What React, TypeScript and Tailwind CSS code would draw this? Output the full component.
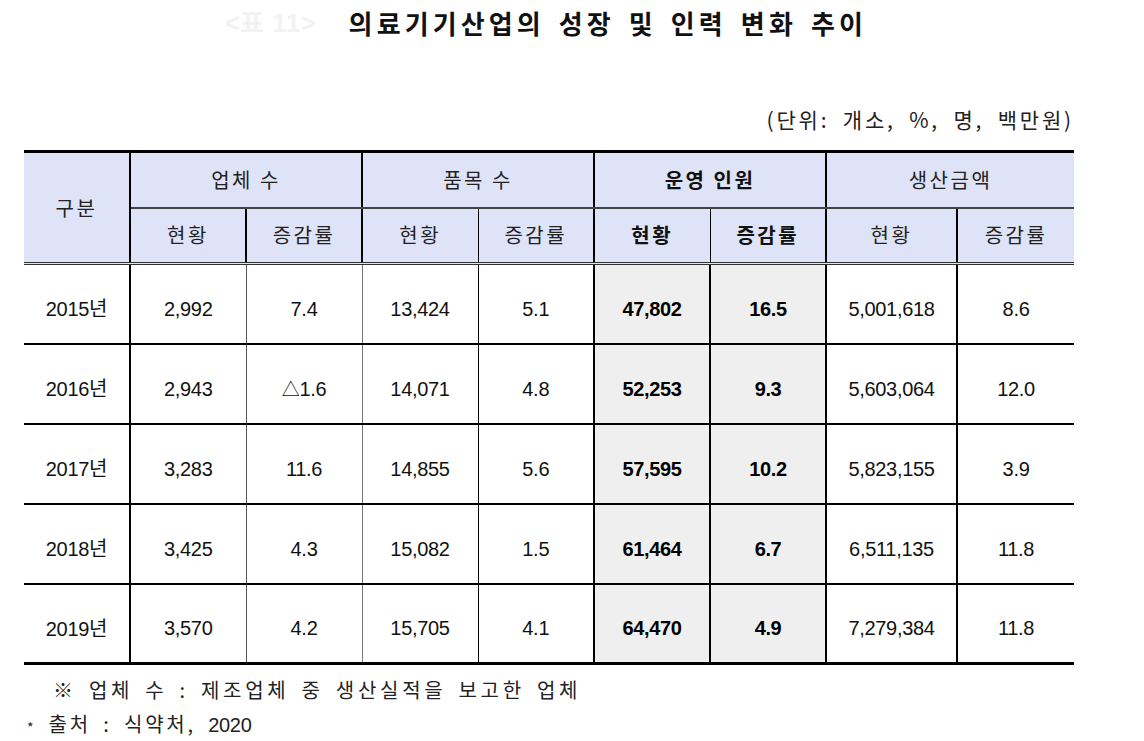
import React from "react";

const kr = { fontFamily: '"Noto Sans CJK KR", "Noto Sans", sans-serif' };
const num = { fontFamily: '"Liberation Sans", Arial, "Noto Sans CJK KR", sans-serif' };

type Row = { y: string; a: string; b: string; c: string; d: string; e: string; f: string; g: string; h: string };
const rows: Row[] = [
  { y: "2015", a: "2,992", b: "7.4", c: "13,424", d: "5.1", e: "47,802", f: "16.5", g: "5,001,618", h: "8.6" },
  { y: "2016", a: "2,943", b: "△1.6", c: "14,071", d: "4.8", e: "52,253", f: "9.3", g: "5,603,064", h: "12.0" },
  { y: "2017", a: "3,283", b: "11.6", c: "14,855", d: "5.6", e: "57,595", f: "10.2", g: "5,823,155", h: "3.9" },
  { y: "2018", a: "3,425", b: "4.3", c: "15,082", d: "1.5", e: "61,464", f: "6.7", g: "6,511,135", h: "11.8" },
  { y: "2019", a: "3,570", b: "4.2", c: "15,705", d: "4.1", e: "64,470", f: "4.9", g: "7,279,384", h: "11.8" },
];

export default function App() {
  const hdBase = "bg-[#dfe3f7] text-[20px] tracking-[2.5px] text-center align-middle p-0";
  const hd = `${hdBase} font-normal text-[#222]`;
  const hdB = `${hdBase} font-bold text-[#111]`;
  const tdBase = "text-center align-middle p-0 pt-[10px]";
  const td = `${tdBase} text-[20px] text-[#111] tracking-[-0.3px]`;
  const tdB = `${tdBase} bg-[#efefef] font-bold text-[20px] text-black tracking-[-0.4px]`;
  return (
    <div className="w-[1144px] h-[741px] bg-white relative overflow-hidden" style={kr}>
      <div className="flex items-center pl-[225px] pt-[3px] h-[42px]">
        <span className="text-[25px] font-bold text-[#f2f2f2] tracking-[1px]" style={num}>
          &lt;<span style={kr}>표</span> 11&gt;
        </span>
        <span className="ml-[32px] text-[26px] font-bold text-[#111] tracking-[4.1px] [word-spacing:4px]">
          의료기기산업의 성장 및 인력 변화 추이
        </span>
      </div>
      <div className="flex justify-end pr-[70px] mt-[61px] h-[34px] items-center">
        <span className="text-[21px] text-[#222] tracking-[2.8px] [word-spacing:6px]">(단위: 개소, %, 명, 백만원)</span>
      </div>
      <div className="ml-[24px] mt-[13px]">
        <table className="border-collapse table-fixed w-[1050px]">
          <colgroup>
            <col className="w-[106px]" />
            <col className="w-[116px]" />
            <col className="w-[116px]" />
            <col className="w-[116px]" />
            <col className="w-[116px]" />
            <col className="w-[116px]" />
            <col className="w-[116px]" />
            <col className="w-[131px]" />
            <col className="w-[117px]" />
          </colgroup>
          <thead>
            <tr className="h-[56px] border-t-[3px] border-black">
              <th rowSpan={2} className={`${hd} border-r-2 border-r-black border-b-[3px] border-b-[#333] border-double`}>
                구분
              </th>
              <th colSpan={2} className={`${hd} border-r-2 border-r-black border-b-2 border-b-[#444]`}>업체 수</th>
              <th colSpan={2} className={`${hd} border-r-2 border-r-black border-b-2 border-b-[#444]`}>품목 수</th>
              <th colSpan={2} className={`${hdB} border-r-2 border-r-black border-b-2 border-b-[#444]`}>운영 인원</th>
              <th colSpan={2} className={`${hd} border-b-2 border-b-[#444]`}>생산금액</th>
            </tr>
            <tr className="h-[56px] border-b-[3px] border-double border-[#333]">
              <th className={`${hd} border-r-2 border-r-black`}>현황</th>
              <th className={`${hd} border-r-2 border-r-black`}>증감률</th>
              <th className={`${hd} border-r border-r-black`}>현황</th>
              <th className={`${hd} border-r-2 border-r-black`}>증감률</th>
              <th className={`${hdB} border-r border-r-black`}>현황</th>
              <th className={`${hdB} border-r-2 border-r-black`}>증감률</th>
              <th className={`${hd} border-r-2 border-r-black`}>현황</th>
              <th className={hd}>증감률</th>
            </tr>
          </thead>
          <tbody>
            {rows.map((r, i) => (
              <tr
                key={r.y}
                className={`h-[80px] ${i === rows.length - 1 ? "border-b-[3px] border-b-black" : "border-b-2 border-b-black"}`}
              >
                <td className={`${td} border-r-2 border-r-black`} style={num}>
                  {r.y}
                  <span style={kr}>년</span>
                </td>
                <td className={`${td} border-r border-r-[#555]`} style={num}>{r.a}</td>
                <td className={`${td} border-r border-r-[#777]`} style={num}>
                  {r.b.startsWith("△") ? (
                    <>
                      <span style={kr} className="text-[18px]">△</span>
                      {r.b.slice(1)}
                    </>
                  ) : (
                    r.b
                  )}
                </td>
                <td className={`${td} border-r border-r-black`} style={num}>{r.c}</td>
                <td className={`${td} border-r-2 border-r-black`} style={num}>{r.d}</td>
                <td className={`${tdB} border-r-2 border-r-black`} style={num}>{r.e}</td>
                <td className={`${tdB} border-r-2 border-r-black`} style={num}>{r.f}</td>
                <td className={`${td} border-r-2 border-r-black`} style={num}>{r.g}</td>
                <td className={td} style={num}>{r.h}</td>
              </tr>
            ))}
          </tbody>
        </table>
      </div>
      <div className="pl-[53px] mt-[9px] text-[20px] text-[#222] tracking-[3.7px] [word-spacing:4px] leading-[32px]">
        ※ 업체 수 : 제조업체 중 생산실적을 보고한 업체
      </div>
      <div className="pl-[27px] mt-[2px] text-[20px] text-[#222] tracking-[2.8px] [word-spacing:5px] leading-[32px]">
        <span className="text-[14px] align-middle">*</span> 출처 : 식약처,{" "}
        <span style={num} className="tracking-[-0.3px]">2020</span>
      </div>
    </div>
  );
}
